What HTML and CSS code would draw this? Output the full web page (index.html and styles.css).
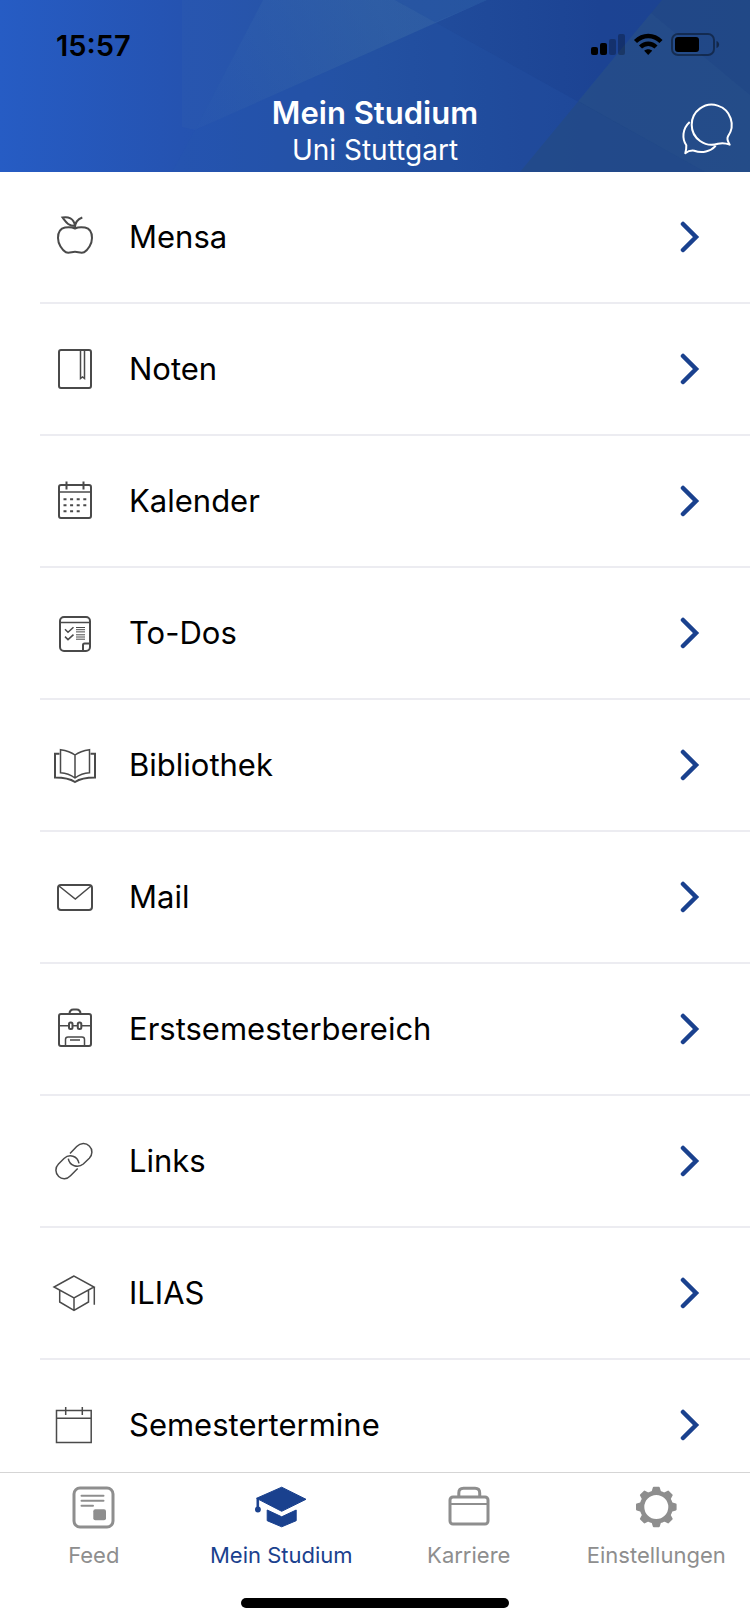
FILE: index.html
```html
<!DOCTYPE html>
<html lang="de">
<head>
    <meta charset="UTF-8">
    <meta name="viewport" content="width=device-width, initial-scale=1.0">
    <title>Mein Studium</title>
    <link rel="stylesheet" href="styles.css">
</head>
<body>
    <header class="header">
        <svg class="header-bg" viewBox="0 0 750 172" preserveAspectRatio="none" aria-hidden="true">
            <defs>
                <linearGradient id="base" x1="0" x2="1">
                    <stop offset="0" stop-color="#265cc4"/>
                    <stop offset="0.24" stop-color="#2553b1"/>
                    <stop offset="0.5" stop-color="#224f9f"/>
                    <stop offset="0.8" stop-color="#1c4393"/>
                    <stop offset="1" stop-color="#1c4490"/>
                </linearGradient>
                <linearGradient id="beam" gradientUnits="userSpaceOnUse" x1="195" y1="130" x2="380" y2="0">
                    <stop offset="0" stop-color="#4274ae" stop-opacity="0.1"/>
                    <stop offset="1" stop-color="#4274ae" stop-opacity="0.38"/>
                </linearGradient>
            </defs>
            <rect width="750" height="172" fill="url(#base)"/>
            <polygon points="182,0 263,0 195,130 182,127" fill="#3b6bb0" opacity="0.15"/>
            <polygon points="263,0 487,0 375,50 195,130" fill="url(#beam)"/>
            <polygon points="195,130 375,50 487,0 395,0 705,172 172,172" fill="#2a5cb0" opacity="0.2"/>
            <polygon points="395,0 487,0 435,22" fill="#153f98" opacity="0.2"/>
            <polygon points="662,0 750,0 750,172 520,172" fill="#254b80" opacity="0.6"/>
            <polygon points="651,13 750,95 750,172 705,172 578,101" fill="#2c568e" opacity="0.3"/>
        </svg>
        <div class="status-bar">
            <div class="time">15:57</div>
            <svg class="status-icons" viewBox="0 0 130 24" aria-hidden="true">
                <rect x="0" y="14" width="7" height="8" rx="2"/>
                <rect x="9" y="10" width="7" height="12" rx="2"/>
                <g opacity="0.25">
                    <rect x="18" y="6" width="7" height="16" rx="2"/>
                    <rect x="27" y="1" width="7" height="21" rx="2"/>
                </g>
                <g fill="none" stroke="#000" stroke-width="4.4">
                    <path d="M44.5 8.5C52 1.2 62.5 1.2 70 8.5"/>
                    <path d="M49.5 14C54 9.7 60.5 9.7 65 14"/>
                </g>
                <path d="M57.2 22l-4-4.2c2.2-2 5.8-2 8 0z"/>
                <rect x="81" y="1" width="42" height="21" rx="6" fill="none" stroke="#000" stroke-width="2" opacity="0.4"/>
                <rect x="84" y="4" width="24" height="15" rx="3"/>
                <path d="M125.5 8c3.5 1 3.5 6 0 7z" opacity="0.45"/>
            </svg>
        </div>
        <div class="title-bar">
            <div class="titles">
                <h1 class="title">Mein Studium</h1>
                <div class="subtitle">Uni Stuttgart</div>
            </div>
            <button class="chat" aria-label="Chat">
                <svg viewBox="0 0 52 52">
                    <path d="M36 38.7A20 20 0 1 1 46 31.3C44.5 34 46 37 47.7 39.7C43 37.7 39 38 36 38.7z"/>
                    <path d="M7.7 17C0 24 0 34 4.3 40.3C4.5 43 4 45.5 3.3 48.3C6 46 9 45.3 12.3 45.7C20 48.5 28.5 46.5 33.7 40.8"/>
                </svg>
            </button>
        </div>
    </header>

    <main class="list">
        <a class="row" href="#">
            <svg class="icon" viewBox="0 0 48 48">
                <path d="M24 15.5C20 13.5 17 14 14 14.5C9 15.5 7 20 7 25C7 31 11 37 15 39.3C18 40.5 21 38.8 24 38.8C27 38.8 30 40.5 33 39.3C37 37 41 31 41 25C41 20 39 15.5 34 14.5C31 14 28 13.5 24 15.5z"/>
                <path d="M24 15C24 10 27 6 31.3 4.5M24 13C17 13 15 9 11.5 4.5C17 3.5 23 5 24 13z"/>
            </svg>
            <span class="label">Mensa</span>
            <svg class="chevron" viewBox="0 0 20 32"><path d="M3 3l13 13-13 13"/></svg>
        </a>
        <a class="row" href="#">
            <svg class="icon" viewBox="0 0 48 48">
                <rect x="8" y="5" width="32" height="38" rx="2"/>
                <path class="thin" d="M29.5 5v28.5l2-1.5 2 1.5V5"/>
            </svg>
            <span class="label">Noten</span>
            <svg class="chevron" viewBox="0 0 20 32"><path d="M3 3l13 13-13 13"/></svg>
        </a>
        <a class="row" href="#">
            <svg class="icon" viewBox="0 0 48 48">
                <rect x="8" y="8" width="32" height="33" rx="2"/>
                <path class="thin" d="M8 15h32"/>
                <path d="M15.5 4.5v8M32.5 4.5v8"/>
                <path d="M12.5 22.3h3m3.6 0h3m3.6 0h3m3.6 0h3M12.5 28.3h3m3.6 0h3m3.6 0h3m3.6 0h3M12.5 34.3h3m3.6 0h3m3.6 0h3"/>
            </svg>
            <span class="label">Kalender</span>
            <svg class="chevron" viewBox="0 0 20 32"><path d="M3 3l13 13-13 13"/></svg>
        </a>
        <a class="row" href="#">
            <svg class="icon" viewBox="0 0 48 48">
                <rect x="9" y="8" width="30" height="34" rx="4"/>
                <path d="M39 34.5h-5.5a1.5 1.5 0 0 0-1.5 1.5v6"/>
                <path class="thin" d="M9 13.5h30M14 20.3l3 3 5.5-5M14 27.6l3 3 5.5-5"/>
                <path class="fine" d="M25 18.5h9M25 20.7h9M25 22.9h9M25 25.8h9M25 28h9M25 30.2h9"/>
            </svg>
            <span class="label">To-Dos</span>
            <svg class="chevron" viewBox="0 0 20 32"><path d="M3 3l13 13-13 13"/></svg>
        </a>
        <a class="row" href="#">
            <svg class="icon" viewBox="0 0 48 48">
                <path d="M8.5 12.8H4v23.7c8 0 14 .5 20 4.5c6-4 12-4.5 20-4.5V12.8h-4.5"/>
                <path class="thin" d="M24 14C20 11 15 9.5 9.5 8.7v23C15 32 20 34 24 37c4-3 9-5 14.5-5.3v-23C33 9.5 28 11 24 14zV37"/>
            </svg>
            <span class="label">Bibliothek</span>
            <svg class="chevron" viewBox="0 0 20 32"><path d="M3 3l13 13-13 13"/></svg>
        </a>
        <a class="row" href="#">
            <svg class="icon" viewBox="0 0 48 48">
                <rect x="7" y="12" width="34" height="25" rx="3"/>
                <path class="thin" d="M8 13l16.3 13L40 13"/>
            </svg>
            <span class="label">Mail</span>
            <svg class="chevron" viewBox="0 0 20 32"><path d="M3 3l13 13-13 13"/></svg>
        </a>
        <a class="row" href="#">
            <svg class="icon" viewBox="0 0 48 48">
                <rect x="8" y="9" width="32" height="32" rx="2"/>
                <path d="M18.5 9c0-3 1.5-4.5 4-4.5h3c2.5 0 4 1.5 4 4.5"/>
                <path class="thin" d="M8 20.7h9.8M22 20.7h4.5M30.5 20.7H40"/>
                <rect x="18" y="17.5" width="3.5" height="6.5" rx="1.5"/>
                <rect x="26.8" y="17.5" width="3.5" height="6.5" rx="1.5"/>
                <path class="thin" d="M14.5 41v-6.5a2.5 2.5 0 0 1 2.5-2.5h14a2.5 2.5 0 0 1 2.5 2.5V41M19 35h10"/>
            </svg>
            <span class="label">Erstsemesterbereich</span>
            <svg class="chevron" viewBox="0 0 20 32"><path d="M3 3l13 13-13 13"/></svg>
        </a>
        <a class="row" href="#">
            <svg class="icon" viewBox="0 0 48 48">
                <path class="thin" d="M26.7 31.5L19.5 38.8C16 42.5 11 42.7 7.7 39.5C4 36 4 30.5 7.5 27L13 21.5C18.5 16.5 26.5 19 28 26.3"/>
                <path class="thin" d="M19 16.5L25.7 9.5C29.5 5.5 35 5.5 38.3 9C42 12.5 41.5 18 38.3 21.3L32.3 27C27 31.5 18.5 29 17.3 21.7"/>
            </svg>
            <span class="label">Links</span>
            <svg class="chevron" viewBox="0 0 20 32"><path d="M3 3l13 13-13 13"/></svg>
        </a>
        <a class="row" href="#">
            <svg class="icon" viewBox="0 0 48 48">
                <path class="thin" d="M23 7L3 18l20 11 20-11zM43.3 18v17.7M8.7 21.3V33L23 41.3 37.5 33V21.3M23 29v12"/>
            </svg>
            <span class="label">ILIAS</span>
            <svg class="chevron" viewBox="0 0 20 32"><path d="M3 3l13 13-13 13"/></svg>
        </a>
        <a class="row" href="#">
            <svg class="icon" viewBox="0 0 48 48">
                <path class="thin" d="M5.5 9.5h34.7v32H5.5zM5.5 17.2h34.7M14.7 6v8M31.3 6v8"/>
            </svg>
            <span class="label">Semestertermine</span>
            <svg class="chevron" viewBox="0 0 20 32"><path d="M3 3l13 13-13 13"/></svg>
        </a>
    </main>

    <nav class="tab-bar">
        <div class="tabs">
            <a class="tab" href="#">
                <svg viewBox="0 0 52 46">
                    <rect x="6" y="3" width="39" height="39" rx="6" fill="none" stroke="currentColor" stroke-width="3"/>
                    <path d="M13.5 10.7h22M13.5 15.7h22M13.5 20.7h11.5" stroke="currentColor" stroke-width="2" stroke-linecap="round"/>
                    <rect x="25.3" y="24.3" width="12.7" height="11" rx="2" fill="currentColor"/>
                </svg>
                <span>Feed</span>
            </a>
            <a class="tab active" href="#">
                <svg viewBox="0 0 52 46">
                    <g fill="currentColor" stroke="currentColor" stroke-linejoin="round">
                        <path d="M26.7 2.2L1.5 13.3 26.7 26.3 51 14.3z"/>
                        <path d="M12.2 25l14.5 6.8L41.2 25v10.7l-14.5 6.1-14.5-6.1z"/>
                        <path d="M2 13.5h1.6v8.5H2z"/>
                    </g>
                    <circle cx="2.9" cy="24.5" r="2.9" fill="currentColor"/>
                </svg>
                <span>Mein Studium</span>
            </a>
            <a class="tab" href="#">
                <svg viewBox="0 0 52 46">
                    <g fill="none" stroke="currentColor" stroke-width="3">
                        <rect x="7" y="12" width="38" height="27" rx="3"/>
                        <path d="M15.8 12V8c0-3 1.7-4.8 4.7-4.8h11.5c3 0 4.7 1.8 4.7 4.8v4"/>
                        <path d="M7 19h38" stroke-width="2"/>
                    </g>
                </svg>
                <span>Karriere</span>
            </a>
            <a class="tab" href="#">
                <svg viewBox="0 0 52 46">
                    <circle cx="26.3" cy="22" r="14.3" fill="none" stroke="currentColor" stroke-width="4.6"/>
                    <g fill="currentColor" stroke="currentColor" stroke-width="2" stroke-linejoin="round">
                        <path id="tooth" d="M22.5 7l1.3-4.3h5L30.1 7z"/>
                        <use href="#tooth" transform="rotate(45 26.3 22)"/>
                        <use href="#tooth" transform="rotate(90 26.3 22)"/>
                        <use href="#tooth" transform="rotate(135 26.3 22)"/>
                        <use href="#tooth" transform="rotate(180 26.3 22)"/>
                        <use href="#tooth" transform="rotate(225 26.3 22)"/>
                        <use href="#tooth" transform="rotate(270 26.3 22)"/>
                        <use href="#tooth" transform="rotate(315 26.3 22)"/>
                    </g>
                </svg>
                <span>Einstellungen</span>
            </a>
        </div>
        <div class="home-indicator"></div>
    </nav>
</body>
</html>
```
FILE: styles.css
```css
* {
    box-sizing: border-box;
}

body {
    margin: 0;
    height: 100vh;
    display: flex;
    flex-direction: column;
    font-family: Inter, 'Liberation Sans', sans-serif;
    background-color: #fff;
    color: #000;
}

a {
    color: inherit;
    text-decoration: none;
}

.header {
    position: relative;
    flex: none;
    padding-bottom: 4px;
    background-color: #224f9f;
    color: #fff;
}

.header-bg {
    position: absolute;
    top: 0;
    left: 0;
    width: 100%;
    height: 100%;
}

.status-bar {
    position: relative;
    display: flex;
    align-items: center;
    justify-content: space-between;
    height: 90px;
    padding: 0 29px 0 56px;
    color: #000;
}

.time {
    font-size: 29px;
    font-weight: 600;
}

.status-icons {
    width: 130px;
    height: 24px;
}

.title-bar {
    position: relative;
    display: grid;
    grid-template-columns: 1fr auto 1fr;
    align-items: center;
    padding: 4px 16px 0;
}

.titles {
    grid-column: 2;
    text-align: center;
}

.title {
    margin: 0;
    font-size: 31px;
    font-weight: 600;
    line-height: 38px;
}

.subtitle {
    font-size: 28px;
    line-height: 36px;
}

.chat {
    justify-self: end;
    width: 52px;
    height: 52px;
    padding: 0;
    border: none;
    background: none;
    cursor: pointer;
}

.chat svg {
    display: block;
    overflow: visible;
    fill: none;
    stroke: #fff;
    stroke-width: 2;
    stroke-linejoin: round;
}

.list {
    flex: 1;
    min-height: 0;
    overflow-y: auto;
    scrollbar-width: none;
}

.row {
    display: flex;
    align-items: center;
    height: 132px;
    margin-left: 40px;
    padding: 0 50px 0 11px;
    border-bottom: 2px solid #ececf1;
}

.icon {
    flex: none;
    width: 48px;
    height: 48px;
    fill: none;
    stroke: #4a4a4a;
    stroke-width: 2;
}

.icon .thin {
    stroke-width: 1.5;
}

.icon .fine {
    stroke-width: 1;
}

.label {
    flex: 1;
    padding-left: 30px;
    font-size: 31px;
    line-height: 40px;
}

.chevron {
    flex: none;
    width: 20px;
    height: 32px;
    fill: none;
    stroke: #1a418e;
    stroke-width: 4.5;
    stroke-linecap: round;
}

.tab-bar {
    flex: none;
    padding: 12px 0 16px;
    border-top: 1px solid #d5d5d5;
    background-color: #fff;
}

.tabs {
    display: flex;
}

.tab {
    flex: 1;
    display: flex;
    flex-direction: column;
    align-items: center;
    gap: 10px;
    color: #8e8e8e;
    font-size: 22px;
    line-height: 28px;
}

.tab.active {
    color: #1a418e;
}

.tab svg {
    width: 52px;
    height: 46px;
}

.home-indicator {
    width: 268px;
    height: 10px;
    margin: 29px auto 0;
    border-radius: 5px;
    background-color: #000;
}
```
